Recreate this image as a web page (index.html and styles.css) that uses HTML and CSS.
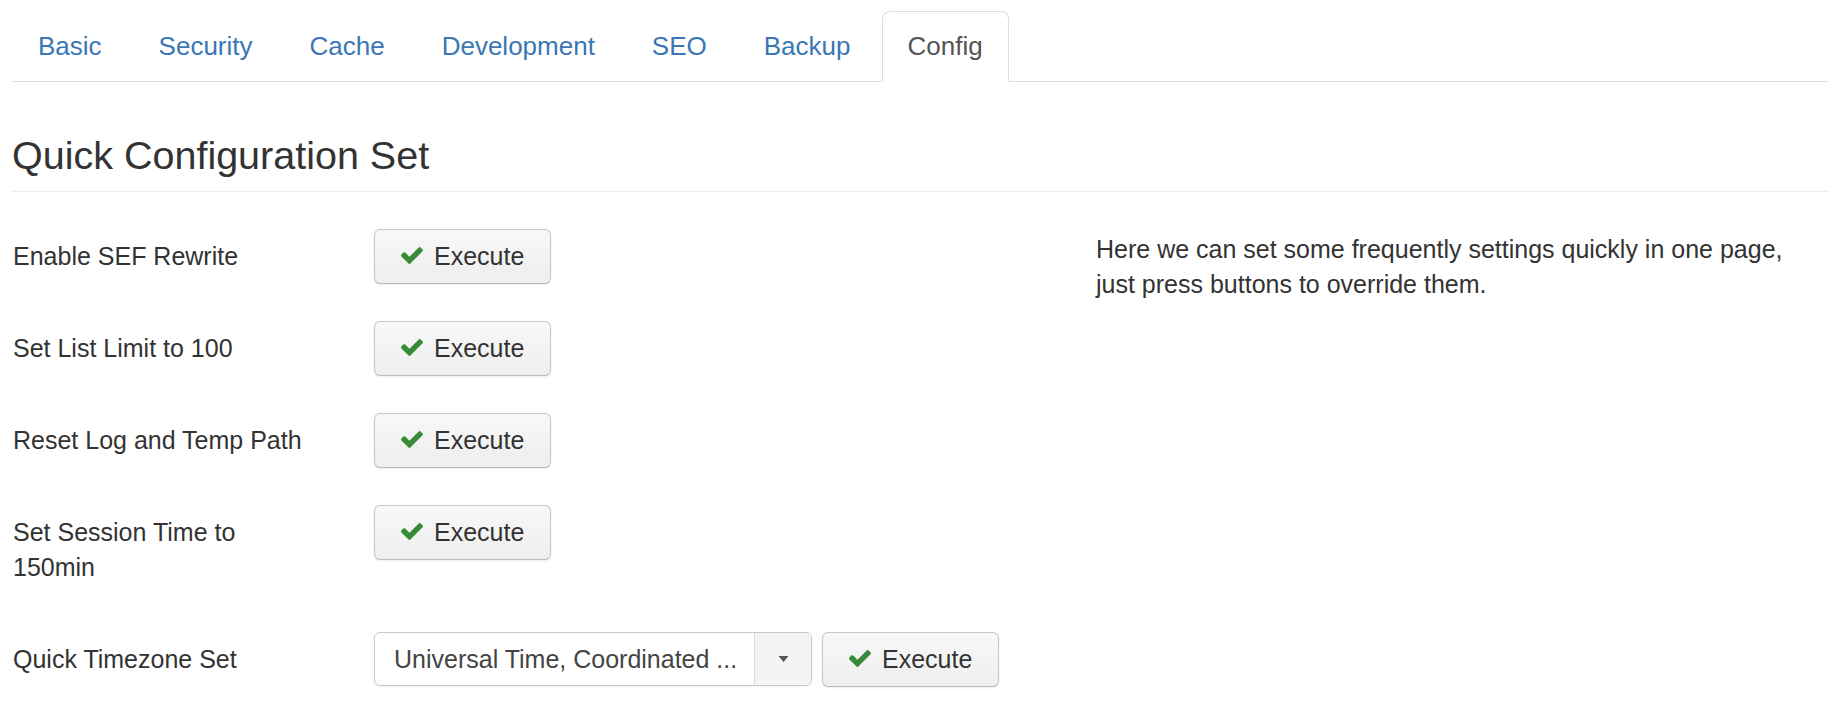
FILE: index.html
```html
<!DOCTYPE html>
<html lang="en">
<head>
<meta charset="utf-8">
<title>Quick Configuration Set</title>
<link rel="stylesheet" href="styles.css">
</head>
<body>
<div class="page">
  <ul class="tabs">
    <li class="tab"><a href="#">Basic</a></li>
    <li class="tab"><a href="#">Security</a></li>
    <li class="tab"><a href="#">Cache</a></li>
    <li class="tab"><a href="#">Development</a></li>
    <li class="tab"><a href="#">SEO</a></li>
    <li class="tab"><a href="#">Backup</a></li>
    <li class="tab active"><a href="#">Config</a></li>
  </ul>

  <h2 class="page-header">Quick Configuration Set</h2>

  <div class="layout">
    <div class="quick-form">
      <div class="row">
        <div class="label">Enable SEF Rewrite</div>
        <div class="controls">
          <button class="btn" type="button"><svg class="ok" viewBox="121 334 1550 1188" aria-hidden="true"><path d="M1671 566q0 40-28 68l-724 724-136 136q-28 28-68 28t-68-28l-136-136-362-362q-28-28-28-68t28-68l136-136q28-28 68-28t68 28l294 295 656-657q28-28 68-28t68 28l136 136q28 28 28 68z"/></svg>Execute</button>
        </div>
      </div>
      <div class="row">
        <div class="label">Set List Limit to 100</div>
        <div class="controls">
          <button class="btn" type="button"><svg class="ok" viewBox="121 334 1550 1188" aria-hidden="true"><path d="M1671 566q0 40-28 68l-724 724-136 136q-28 28-68 28t-68-28l-136-136-362-362q-28-28-28-68t28-68l136-136q28-28 68-28t68 28l294 295 656-657q28-28 68-28t68 28l136 136q28 28 28 68z"/></svg>Execute</button>
        </div>
      </div>
      <div class="row">
        <div class="label">Reset Log and Temp Path</div>
        <div class="controls">
          <button class="btn" type="button"><svg class="ok" viewBox="121 334 1550 1188" aria-hidden="true"><path d="M1671 566q0 40-28 68l-724 724-136 136q-28 28-68 28t-68-28l-136-136-362-362q-28-28-28-68t28-68l136-136q28-28 68-28t68 28l294 295 656-657q28-28 68-28t68 28l136 136q28 28 28 68z"/></svg>Execute</button>
        </div>
      </div>
      <div class="row">
        <div class="label">Set Session Time to 150min</div>
        <div class="controls">
          <button class="btn" type="button"><svg class="ok" viewBox="121 334 1550 1188" aria-hidden="true"><path d="M1671 566q0 40-28 68l-724 724-136 136q-28 28-68 28t-68-28l-136-136-362-362q-28-28-28-68t28-68l136-136q28-28 68-28t68 28l294 295 656-657q28-28 68-28t68 28l136 136q28 28 28 68z"/></svg>Execute</button>
        </div>
      </div>
      <div class="row">
        <div class="label">Quick Timezone Set</div>
        <div class="controls">
          <div class="select">
            <span class="select-text">Universal Time, Coordinated ...</span>
            <span class="select-caret"><svg viewBox="0 0 10 6" aria-hidden="true"><path d="M0 0h10L5 6z"/></svg></span>
          </div>
          <button class="btn" type="button"><svg class="ok" viewBox="121 334 1550 1188" aria-hidden="true"><path d="M1671 566q0 40-28 68l-724 724-136 136q-28 28-68 28t-68-28l-136-136-362-362q-28-28-28-68t28-68l136-136q28-28 68-28t68 28l294 295 656-657q28-28 68-28t68 28l136 136q28 28 28 68z"/></svg>Execute</button>
        </div>
      </div>
    </div>
    <p class="desc">Here we can set some frequently settings quickly in one page, just press buttons to override them.</p>
  </div>
</div>
</body>
</html>
```

FILE: styles.css
```css
html, body {
  margin: 0;
  padding: 0;
  background: #fff;
}

body {
  font-family: "Liberation Sans", Arial, sans-serif;
  font-size: 25px;
  line-height: 35px;
  color: #333;
}

.page {
  padding: 11px 6px 0 12px;
}

/* Tabs */
.tabs {
  list-style: none;
  margin: 0;
  padding: 0;
  display: flex;
  border-bottom: 1px solid #ddd;
}

.tab {
  margin-right: 5px;
  margin-bottom: -1px;
}

.tab a {
  display: block;
  padding: 17px 25px 17px;
  border: 1px solid transparent;
  border-bottom: 0;
  border-radius: 8px 8px 0 0;
  font-size: 26px;
  line-height: 35px;
  color: #3a77b4;
  text-decoration: none;
}

.tab.active a {
  border-color: #ddd;
  background: #fff;
  color: #555;
  padding-bottom: 18px;
}

/* Heading */
.page-header {
  margin: 50px 0 37px;
  padding: 0 0 13px;
  border-bottom: 1px solid #eee;
  font-size: 39.5px;
  line-height: 46px;
  font-weight: normal;
  color: #333;
}

/* Layout */
.layout {
  display: grid;
  grid-template-columns: 1072px 1fr;
  column-gap: 12px;
  align-items: start;
}

.row {
  display: flex;
  align-items: flex-start;
  margin-bottom: 35px;
}

.label {
  width: 306px;
  margin-right: 56px;
  padding: 10px 0 12px 1px;
  box-sizing: border-box;
}

.controls {
  display: flex;
  align-items: flex-start;
  gap: 10px;
}

.btn {
  display: inline-flex;
  align-items: center;
  height: 55px;
  box-sizing: border-box;
  padding: 0 26px;
  border: 1px solid #c6c6c6;
  border-bottom-color: #b9b9b9;
  border-radius: 6px;
  background: linear-gradient(#f8f8f8, #eeeeee);
  box-shadow: 0 1px 2px rgba(0, 0, 0, 0.08);
  font-family: "Liberation Sans", Arial, sans-serif;
  font-size: 25px;
  line-height: 35px;
  color: #333;
  cursor: pointer;
}

.ok {
  width: 22px;
  height: 17px;
  margin-right: 11px;
  margin-top: -3px;
  fill: #378a38;
}

.select {
  display: flex;
  width: 438px;
  height: 54px;
  box-sizing: border-box;
  border: 1px solid #c9c9c9;
  border-radius: 6px;
  background: #fff;
  box-shadow: 0 1px 2px rgba(0, 0, 0, 0.06);
  overflow: hidden;
}

.select-text {
  flex: 1;
  padding: 9px 0 0 19px;
  color: #444;
  white-space: nowrap;
}

.select-caret {
  width: 56px;
  border-left: 1px solid #dcdcdc;
  background: #f4f4f4;
  display: flex;
  align-items: center;
  justify-content: center;
}

.select-caret svg {
  width: 11px;
  height: 6px;
  fill: #555;
}

.desc {
  margin: 0;
  padding-top: 3px;
  color: #333;
}
```
